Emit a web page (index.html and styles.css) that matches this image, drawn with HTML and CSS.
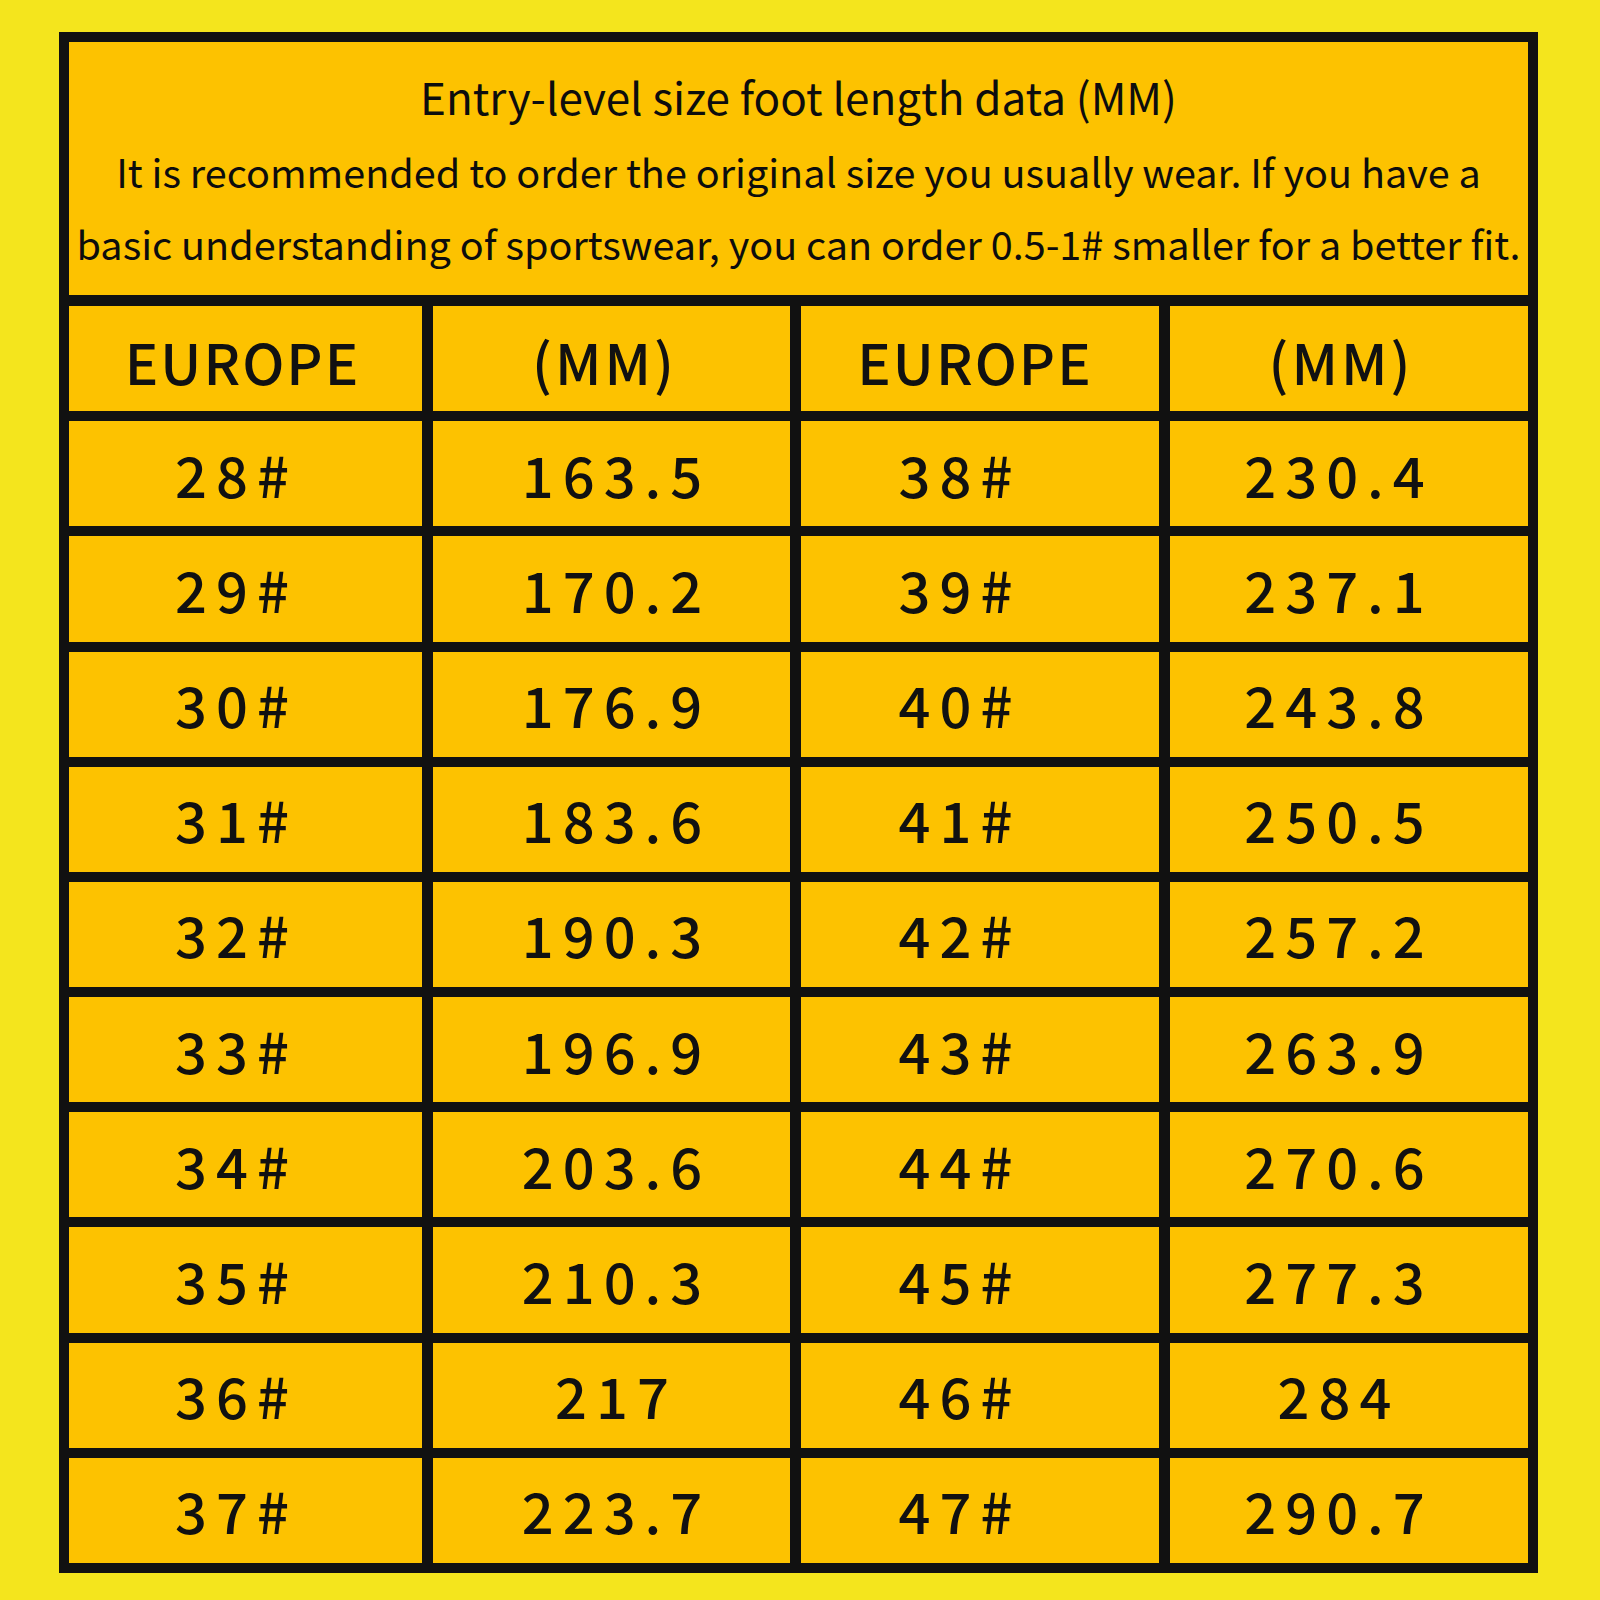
FILE: index.html
```html
<!DOCTYPE html>
<html lang="en">
<head>
<meta charset="utf-8">
<title>Size chart</title>
<link rel="stylesheet" href="styles.css">
</head>
<body>
<div class="chart">
  <div class="intro">
    <h1 class="title">Entry-level size foot length data (MM)</h1>
    <p class="note"><span class="line">It is recommended to order the original size you usually wear. If you have a</span><span class="line">basic understanding of sportswear, you can order 0.5-1# smaller for a better fit.</span></p>
  </div>
  <div class="grid">
    <div class="cell head">EUROPE</div><div class="cell head">(MM)</div><div class="cell head">EUROPE</div><div class="cell head">(MM)</div>
    <div class="cell">28#</div><div class="cell">163.5</div><div class="cell">38#</div><div class="cell">230.4</div>
    <div class="cell">29#</div><div class="cell">170.2</div><div class="cell">39#</div><div class="cell">237.1</div>
    <div class="cell">30#</div><div class="cell">176.9</div><div class="cell">40#</div><div class="cell">243.8</div>
    <div class="cell">31#</div><div class="cell">183.6</div><div class="cell">41#</div><div class="cell">250.5</div>
    <div class="cell">32#</div><div class="cell">190.3</div><div class="cell">42#</div><div class="cell">257.2</div>
    <div class="cell">33#</div><div class="cell">196.9</div><div class="cell">43#</div><div class="cell">263.9</div>
    <div class="cell">34#</div><div class="cell">203.6</div><div class="cell">44#</div><div class="cell">270.6</div>
    <div class="cell">35#</div><div class="cell">210.3</div><div class="cell">45#</div><div class="cell">277.3</div>
    <div class="cell">36#</div><div class="cell">217</div><div class="cell">46#</div><div class="cell">284</div>
    <div class="cell">37#</div><div class="cell">223.7</div><div class="cell">47#</div><div class="cell">290.7</div>
  </div>
</div>
</body>
</html>
```
FILE: styles.css
```css
html, body {
  margin: 0;
  padding: 0;
}
body {
  background: #f4e51d;
  width: 1600px;
  height: 1600px;
  padding-top: 32px;
  box-sizing: border-box;
}
.chart {
  margin-left: 59px;
  width: 1479px;
  box-sizing: border-box;
  border: 10px solid #111;
  background: #111;
}
.intro {
  height: 252px;
  background: #fdc200;
  border-bottom: 11px solid #111;
  box-sizing: content-box;
  text-align: center;
  font-family: "Noto Sans CJK SC", "Noto Sans", sans-serif;
  color: #0d0d0d;
  padding-top: 1px;
}
.title {
  margin: 0;
  font-weight: 400;
  font-size: 44px;
  line-height: 72px;
  padding-top: 17px;
  padding-bottom: 3px;
}
.note {
  margin: 0;
  font-size: 39.6px;
  line-height: 72px;
}
.line {
  display: block;
  white-space: nowrap;
}
.grid {
  display: grid;
  grid-template-columns: 353px 357px 358px 1fr;
  grid-template-rows: repeat(11, 1fr);
  column-gap: 11px;
  row-gap: 10px;
  height: 1257px;
}
.cell {
  background: #fdc200;
  display: flex;
  align-items: center;
  justify-content: center;
  font-family: "Noto Sans CJK SC", sans-serif;
  font-weight: 500;
  font-size: 56px;
  letter-spacing: 9px;
  color: #111;
  line-height: 1;
  box-sizing: border-box;
}
.cell:nth-child(4n+1) {
  padding-right: 18px;
}
.cell:nth-child(4n+2) {
  padding-left: 10px;
}
.cell:nth-child(4n+3) {
  padding-right: 40px;
}
.cell:nth-child(4n) {
  padding-right: 20px;
}
.cell.head {
  letter-spacing: 2px;
  padding-left: 0;
  padding-top: 4px;
}
.cell.head:nth-child(1) {
  padding-right: 6px;
}
.cell.head:nth-child(2) {
  padding-right: 14px;
  letter-spacing: 3px;
}
.cell.head:nth-child(3) {
  padding-right: 10px;
}
.cell.head:nth-child(4) {
  padding-right: 16px;
  letter-spacing: 3px;
}
```
